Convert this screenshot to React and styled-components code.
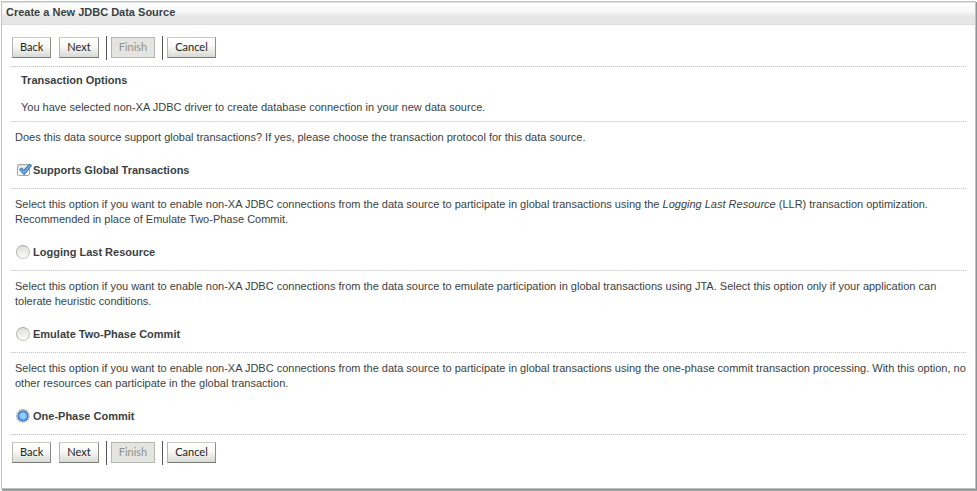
import React, { useState } from "react";
import styled, { createGlobalStyle } from "styled-components";

const GlobalStyle = createGlobalStyle`
  * { box-sizing: border-box; }
  html, body, #root { height: 100%; }
  body {
    margin: 0;
    background: #fff;
    color: #3a3f43;
    font: 11px/15px "Liberation Sans", Arial, sans-serif;
  }
`;

const Page = styled.div`
  min-height: 100%;
  display: flex;
  padding: 1px 1px 2px;
`;

const Panel = styled.form`
  flex: 1;
  min-width: 0;
  border: 1px solid #bcc3c3;
  box-shadow: 1px 1px 0 #8e9292, 1px 2px 0 #a9abab;
`;

const Title = styled.h1`
  margin: 0;
  height: 23px;
  padding: 2px 4px 0;
  font-size: 11px;
  line-height: 15px;
  border-top: 1px solid #dde1e1;
  border-bottom: 1px solid #dcdcdc;
  background: linear-gradient(#fff, #f7f7f7 40%, #e6e6e6 65%, #e6e6e6);
`;

const Content = styled.div`
  padding: 0 9px;
`;

const Rule = styled.hr`
  height: 1px;
  margin: 0;
  border: 0;
  background: repeating-linear-gradient(90deg, #c4c4c4 0 1px, #f4f4f4 1px 2px);
`;

const Toolbar = styled.div`
  display: flex;
  align-items: flex-start;
  padding: ${(p) => (p.$top ? "11px 1px 6px" : "6px 1px")};
`;

const Button = styled.button`
  height: 21px;
  margin: 1px 0 0;
  padding: 0 7px 1px;
  border: 1px solid;
  border-color: #c9cbc6 #8c8e8a #777975 #b4b6b1;
  background: linear-gradient(#fff, #f8f8f5 45%, #d8dad4);
  color: #222;
  font: 11px/18px Lato, "Noto Sans", sans-serif;
  font-variant-ligatures: none;

  & + & { margin-left: 8px; }

  &:disabled {
    border-color: #b4b6b0;
    background: #e4e5e0;
    color: #8f918c;
  }
`;

const Separator = styled.span`
  width: 1px;
  height: 24px;
  margin: 0 4px 0 7px;
  background: #555;
`;

const Intro = styled.section`
  display: grid;
  gap: 12px;
  padding: 6px 10px;
`;

const Heading = styled.h2`
  margin: 0;
  font-size: 11px;
  line-height: 15px;
`;

const Text = styled.p`
  margin: 0;
`;

const Option = styled.section`
  display: grid;
  gap: 18px;
  padding: 8px 0 10px 4px;
`;

const Choice = styled.label`
  display: flex;
  align-items: center;
  justify-self: start;
  height: 15px;
  font-weight: bold;
`;

const Mark = styled.span`
  position: relative;
  display: flex;
  width: 18px;
  height: 15px;
  align-items: flex-start;

  svg {
    position: absolute;
    inset: 0;
    pointer-events: none;
  }
`;

const Radio = styled.input`
  appearance: none;
  width: 14px;
  height: 14px;
  margin: 0 0 0 1px;
  border: 1px solid;
  border-color: #a9aba4 #c3c5be #c9cac4 #b5b7b0;
  border-radius: 50%;
  background: linear-gradient(#dfe0dc, #fafaf8);

  &:checked {
    background: radial-gradient(circle at 50% 50%, #9accff 0 2px, #5ba8f5 4px, #2c62ae 5px, #f1f3ee 6px);
  }
`;

const Check = styled.input`
  appearance: none;
  width: 13px;
  height: 12px;
  margin: 1px 0 0 2px;
  border: 1px solid #a5a79f;
  border-radius: 2px;
  background: linear-gradient(#e2e3de, #fff);

  &:not(:checked) + svg { display: none; }
`;

const protocols = [
  {
    id: "llr",
    label: "Logging Last Resource",
    text: (
      <>
        Select this option if you want to enable non-XA JDBC connections from the data source to
        participate in global transactions using the <em>Logging Last Resource</em> (LLR)
        transaction optimization. Recommended in place of Emulate Two-Phase Commit.
      </>
    ),
  },
  {
    id: "two-phase",
    label: "Emulate Two-Phase Commit",
    text: "Select this option if you want to enable non-XA JDBC connections from the data source to emulate participation in global transactions using JTA. Select this option only if your application can tolerate heuristic conditions.",
  },
  {
    id: "one-phase",
    label: "One-Phase Commit",
    text: "Select this option if you want to enable non-XA JDBC connections from the data source to participate in global transactions using the one-phase commit transaction processing. With this option, no other resources can participate in the global transaction.",
  },
];

function WizardButtons({ top }) {
  return (
    <Toolbar $top={top}>
      <Button type="button">Back</Button>
      <Button type="button">Next</Button>
      <Separator />
      <Button type="button" disabled>Finish</Button>
      <Separator />
      <Button type="button">Cancel</Button>
    </Toolbar>
  );
}

export default function App() {
  const [global, setGlobal] = useState(true);
  const [protocol, setProtocol] = useState("one-phase");

  return (
    <Page>
      <GlobalStyle />
      <Panel>
        <Title>Create a New JDBC Data Source</Title>
        <Content>
          <WizardButtons top />
          <Rule />
          <Intro>
            <Heading>Transaction Options</Heading>
            <Text>
              You have selected non-XA JDBC driver to create database connection in your new data
              source.
            </Text>
          </Intro>
          <Rule />
          <Option>
            <Text>
              Does this data source support global transactions? If yes, please choose the
              transaction protocol for this data source.
            </Text>
            <Choice>
              <Mark>
                <Check
                  type="checkbox"
                  checked={global}
                  onChange={(e) => setGlobal(e.target.checked)}
                />
                <svg width="18" height="15" viewBox="0 0 18 15" aria-hidden="true">
                  <path
                    d="M4.5 6.5 6.8 5 8.8 7.3 14.2 1.3 16.6 2.4 9.2 11.8Z"
                    fill="#69a9e8"
                    stroke="#2d66ac"
                    strokeLinejoin="round"
                  />
                </svg>
              </Mark>
              Supports Global Transactions
            </Choice>
          </Option>
          <Rule />
          {protocols.map((p) => (
            <React.Fragment key={p.id}>
              <Option>
                <Text>{p.text}</Text>
                <Choice>
                  <Mark>
                    <Radio
                      type="radio"
                      name="protocol"
                      value={p.id}
                      checked={protocol === p.id}
                      onChange={() => setProtocol(p.id)}
                    />
                  </Mark>
                  {p.label}
                </Choice>
              </Option>
              <Rule />
            </React.Fragment>
          ))}
          <WizardButtons />
        </Content>
      </Panel>
    </Page>
  );
}
